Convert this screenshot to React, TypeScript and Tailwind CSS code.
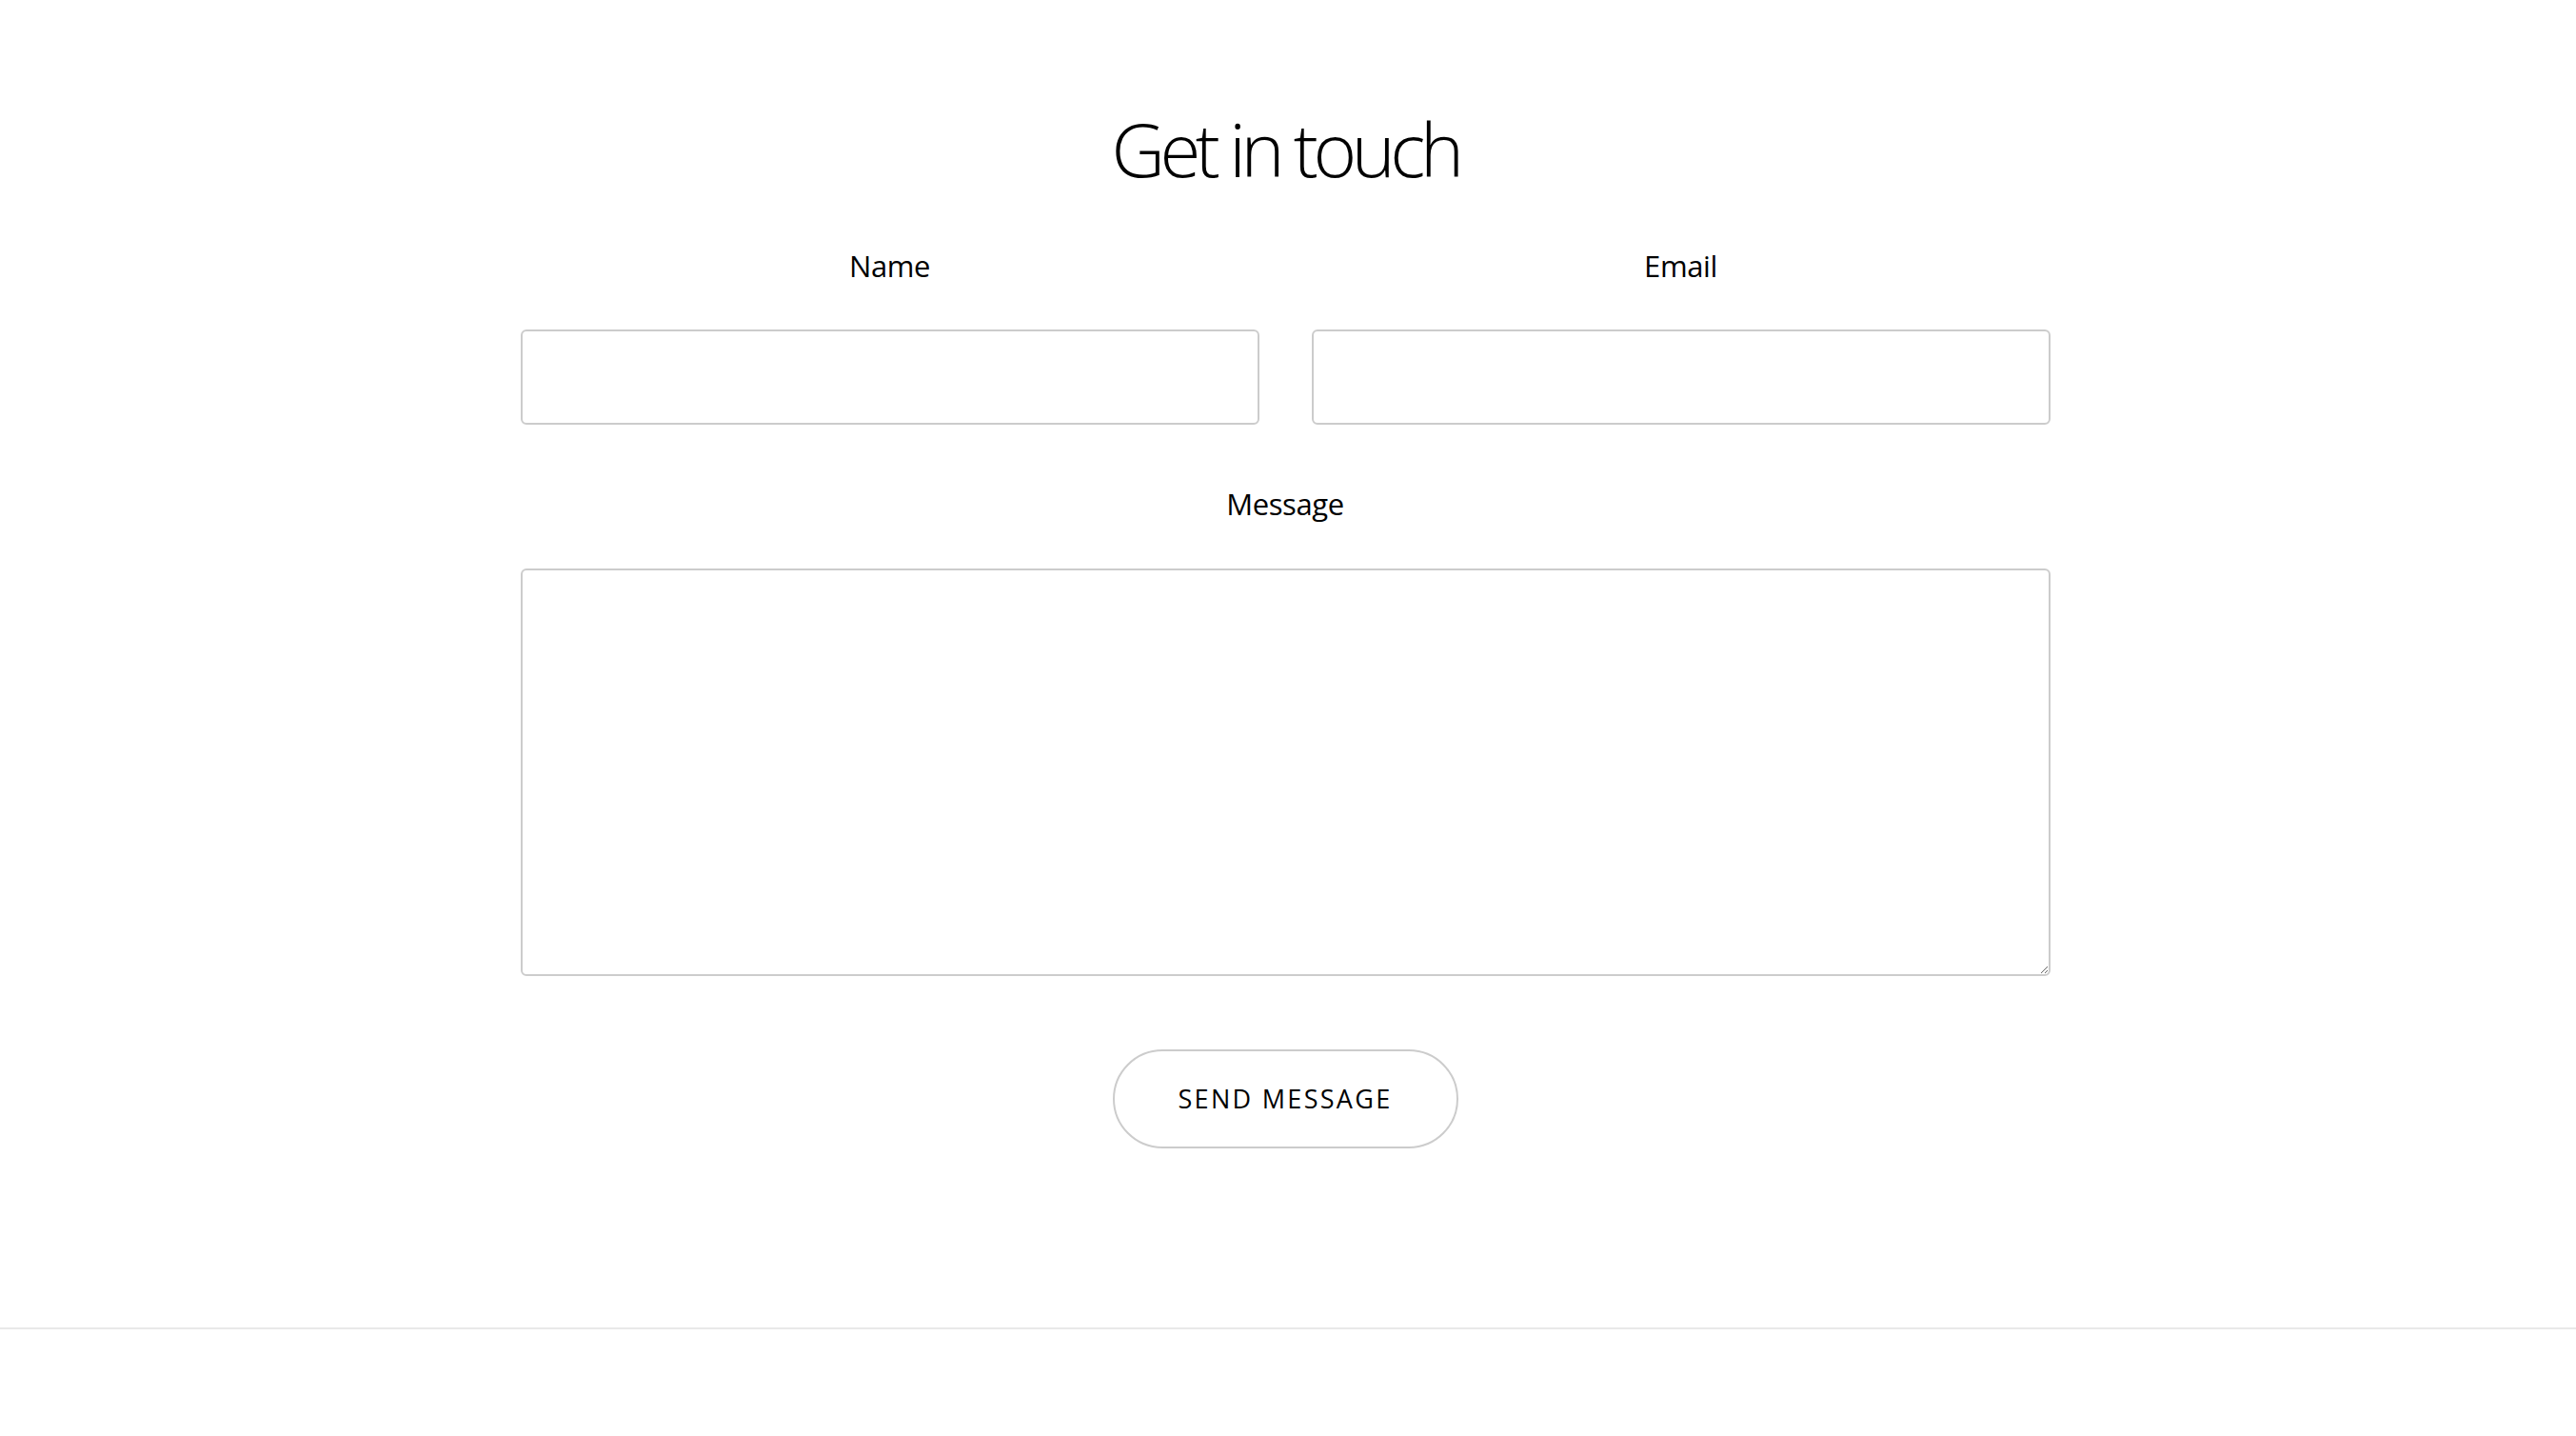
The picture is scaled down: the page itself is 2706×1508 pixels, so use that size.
import React from 'react';

const fieldClass =
  "block w-full rounded-[6px] border-2 border-[#cccccc] bg-white px-4 text-[30px] text-black outline-none";

const labelText = "text-[31px] leading-[33px] tracking-[-0.4px] text-black";

function Field({ label }: { label: string }) {
  return (
    <label className="flex flex-col items-center">
      <span className={labelText}>{label}</span>
      <input type="text" className={`${fieldClass} mt-[50px] h-[100px]`} />
    </label>
  );
}

export default function App() {
  return (
    <div className="min-h-screen bg-white font-['Open_Sans',_sans-serif]">
      <section className="flex flex-col items-center pt-[117px] pr-[6px] pb-[188px]">
        <h1 className="text-[78px] leading-[78px] font-light tracking-[-0.07em] text-black">
          Get in touch
        </h1>

        <form className="mt-[68px] flex w-[1607px] flex-col items-center" onSubmit={(e) => e.preventDefault()}>
          <div className="grid w-full grid-cols-2 gap-[55px]">
            <Field label="Name" />
            <Field label="Email" />
          </div>

          <label className="mt-[67px] flex w-full flex-col items-center">
            <span className={labelText}>Message</span>
            <textarea className={`${fieldClass} mt-[51px] h-[428px] py-3`} />
          </label>

          <button
            type="submit"
            className="mt-[77px] h-[104px] w-[363px] rounded-full border-2 border-[#cccccc] bg-white text-[27px] tracking-[2.3px] text-black uppercase"
          >
            Send message
          </button>
        </form>
      </section>
      <div className="border-t-2 border-[#e9e9e9]" />
    </div>
  );
}
